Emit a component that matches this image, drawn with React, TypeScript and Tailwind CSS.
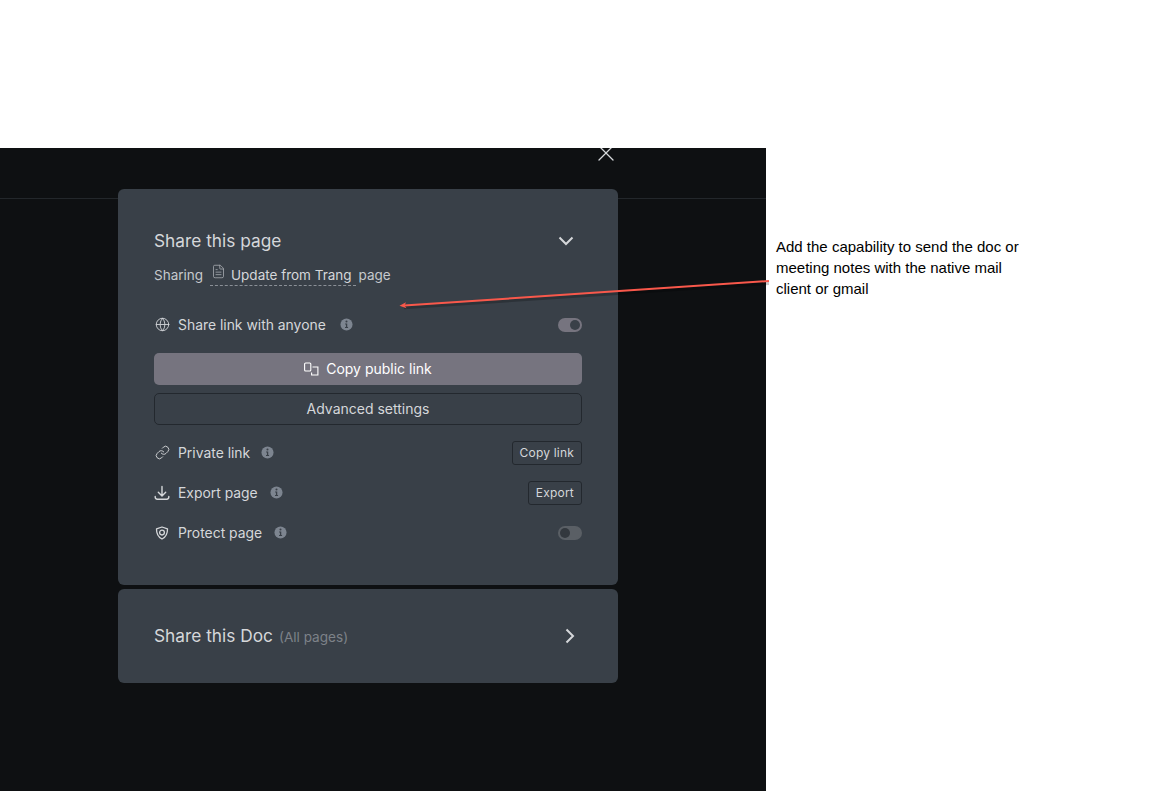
import { FC, ReactNode } from "react";
import { FileText, Globe, Link, X } from "lucide-react";

const InfoDot: FC = () => (
    <svg width="13" height="13" viewBox="0 0 14 14" className="shrink-0">
        <circle cx="7" cy="7" r="6.500" fill="#7d8590" />
        <circle cx="7" cy="3.800" r="1.100" fill="#394048" />
        <path d="M5.500 6h2.300v3.600h.9v1.100H5.400V9.600h1V7.100h-.9z" fill="#394048" />
    </svg>
);

const ShieldIcon: FC = () => (
    <svg width="16" height="16" viewBox="0 0 16 16" fill="none" stroke="#d5d7da" strokeWidth="1.300">
        <path d="M8 2l5.500 1.900c.1 4.400-1.600 8-5.500 10.100C4.100 11.900 2.400 8.300 2.500 3.900z" strokeLinejoin="round" />
        <circle cx="8" cy="7.600" r="2.400" />
    </svg>
);

const DownloadIcon: FC = () => (
    <svg width="16" height="16" viewBox="0 0 16 16" fill="none" stroke="#d5d7da" strokeWidth="1.400" strokeLinecap="round" strokeLinejoin="round">
        <path d="M8 1.500v9M4.300 7.200L8 10.900l3.700-3.700" />
        <path d="M1.200 11.500v.6c0 1.200.8 2.100 2 2.100h9.600c1.200 0 2-.9 2-2.100v-.6" />
    </svg>
);

const CopyIcon: FC = () => (
    <svg width="15" height="14" viewBox="0 0 15 14" fill="none" stroke="#ffffff" strokeWidth="1.100">
        <rect x="0.600" y="1" width="6.200" height="8" rx="1" />
        <path d="M8.500 5h5.400v8H7.600v-2.500" />
    </svg>
);

const Toggle: FC<{ on?: boolean }> = ({ on }) => (
    <div className={on
        ? "flex h-[14px] w-[24px] items-center justify-end rounded-full bg-[#76747f] px-[2px]"
        : "flex h-[14px] w-[24px] items-center justify-start rounded-full bg-[#5a5f65] px-[2px]"}>
        <div className={on ? "h-[10px] w-[10px] rounded-full bg-[#394048]" : "h-[10px] w-[10px] rounded-full bg-[#33383e]"} />
    </div>
);

const SmallButton: FC<{ label: string }> = ({ label }) => (
    <button className="flex h-6 items-center rounded-[3px] border border-[#23282e] px-[7px] text-xs tracking-[0.2px] text-[#d5d7da]">
        {label}
    </button>
);

const Row: FC<{ icon: ReactNode; label: string; gap: string; right: ReactNode }> = ({ icon, label, gap, right }) => (
    <div className="flex h-6 items-center justify-between">
        <div className="flex items-center">
            <div className="flex w-4 justify-center">{icon}</div>
            <span className="ml-2 text-[13.9px] text-[#d5d7da]">{label}</span>
            <div className={gap}><InfoDot /></div>
        </div>
        {right}
    </div>
);

const App: FC = () => {
    return (
        <div className="relative h-[791px] w-[1168px] overflow-hidden bg-white font-['Inter',sans-serif]">
            <div className="flex pt-[148px]">
                <div className="h-[643px] w-[766px] overflow-hidden bg-[#0e1012]">
                    <div className="flex h-[51px] justify-end border-b border-[#23272b] pr-[146px]">
                        <X size={28} strokeWidth={1.1} color="#d5d7da" className="-mt-[9px]" />
                    </div>

                    <div className="relative -mt-[10px] ml-[118px] w-[500px]">
                        <div className="h-[396px] rounded-md bg-[#394048] px-9 pt-10">
                            <div className="flex h-6 items-center justify-between">
                                <h2 className="text-[17.3px] leading-6 text-[#d5d7da]">Share this page</h2>
                                <svg width="16" height="10" viewBox="0 0 16 10" fill="none" stroke="#d5d7da" strokeWidth="2" className="mr-2">
                                    <path d="M1.500 1.500L8 8l6.500-6.500" />
                                </svg>
                            </div>
                            <div className="mt-[12px] flex h-[20px] items-center text-[13.5px] text-[#c6c9cd]">
                                <span>Sharing</span>
                                <span className="ml-[7px] flex h-[22px] items-center border-b border-dashed border-[#8b9097] px-[1px]">
                                    <FileText size={15} strokeWidth={1.2} color="#aeb2b7" className="-mt-[6px]" />
                                    <span className="ml-[5px] mr-[3px] mt-[1px] text-[#d5d7da]">Update from Trang</span>
                                </span>
                                <span className="ml-[3px]">page</span>
                            </div>

                            <div className="mt-[28px]">
                                <Row
                                    icon={<Globe size={15} strokeWidth={1.4} color="#d5d7da" />}
                                    label="Share link with anyone"
                                    gap="ml-[14px]"
                                    right={<Toggle on />}
                                />
                            </div>

                            <button className="mt-4 flex h-8 w-full items-center justify-center gap-[7px] rounded-[5px] bg-[#76747f] text-sm text-white">
                                <CopyIcon />
                                Copy public link
                            </button>
                            <button className="mt-2 flex h-8 w-full items-center justify-center rounded-[5px] border border-[#23282e] text-sm text-[#d5d7da]">
                                Advanced settings
                            </button>

                            <div className="mt-4 flex flex-col gap-4">
                                <Row
                                    icon={<Link size={15} strokeWidth={1.5} color="#d5d7da" />}
                                    label="Private link"
                                    gap="ml-[11px]"
                                    right={<SmallButton label="Copy link" />}
                                />
                                <Row
                                    icon={<DownloadIcon />}
                                    label="Export page"
                                    gap="ml-[12px]"
                                    right={<SmallButton label="Export" />}
                                />
                                <Row
                                    icon={<ShieldIcon />}
                                    label="Protect page"
                                    gap="ml-[12px]"
                                    right={<Toggle />}
                                />
                            </div>
                        </div>

                        <div className="mt-1 flex h-[94px] items-center justify-between rounded-md bg-[#394048] pl-9 pr-[43px]">
                            <div className="flex items-baseline">
                                <h2 className="text-[17.3px] text-[#d5d7da]">Share this Doc</h2>
                                <span className="ml-[6px] text-[13.6px] text-[#7d8288]">(All pages)</span>
                            </div>
                            <svg width="10" height="16" viewBox="0 0 10 16" fill="none" stroke="#d5d7da" strokeWidth="2">
                                <path d="M1.500 1.500L8 8l-6.500 6.500" />
                            </svg>
                        </div>
                    </div>
                </div>

                <p className="ml-[10px] mt-[88px] w-[250px] font-['Liberation_Sans',sans-serif] text-[15px] leading-[21px] text-black">
                    Add the capability to send the doc or meeting notes with the native mail client or gmail
                </p>
            </div>

            {/* red annotation arrow over the dialog */}
            <svg className="pointer-events-none absolute left-0 top-0" width="1168" height="791" viewBox="0 0 1168 791" fill="none">
                <path d="M769 281.500L404 305.700" stroke="#000" strokeOpacity="0.22" strokeWidth="3" transform="translate(0 2)" />
                <path d="M769 281L404 305.500" stroke="#f9584b" strokeWidth="2" />
                <path d="M399.500 305.800L406 302.300L404.500 305.400L406.500 308.300z" fill="#f9584b" />
            </svg>
        </div>
    );
};

export default App;
